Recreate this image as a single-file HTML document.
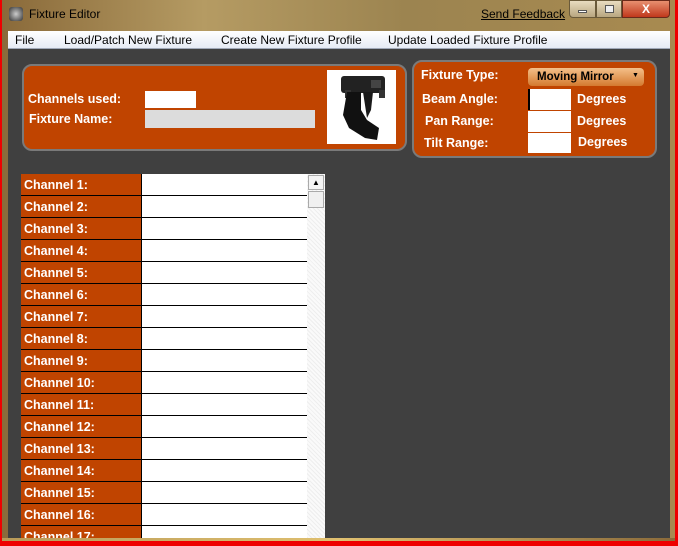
<!DOCTYPE html><html><head><style>
*{margin:0;padding:0;box-sizing:border-box}
body{width:678px;height:546px;overflow:hidden;background:#e00;font-family:"Liberation Sans",sans-serif;position:relative}
.a{position:absolute}
.frame{left:2px;top:0;width:673px;height:541px;background:linear-gradient(90deg,#8a6a3a,#b59b63 30%,#9c8450 60%,#a88a50);}
.title{left:29px;top:7px;font-size:12px;color:#000}
.menu{left:8px;top:31px;width:662px;height:18px;background:linear-gradient(#fff,#e6ebf5);border-bottom:1px solid #a0a8b8;font-size:12px}
.menu span{position:absolute;top:2px}
.content{left:8px;top:49px;width:662px;height:489px;background:#404040}
.panel{background:#c04400;border:2px solid #7a7a7a;border-radius:10px}
.lbl{color:#fff;font-weight:bold;font-size:12.5px;position:absolute}
.box{background:#fff;position:absolute}
.row{position:absolute;left:21px;width:286px;height:22px}
.row .l{position:absolute;left:0;top:0;width:120px;height:22px;background:#c04400;border-bottom:1px solid #000;color:#fff;font-weight:bold;font-size:12.5px;padding:4px 0 0 3px}
.row .i{position:absolute;left:120px;top:0;width:166px;height:22px;background:#fff;border-bottom:1px solid #000;border-left:1px solid #000}
</style></head><body>
<div class="a frame"></div>
<div class="a" style="left:9px;top:7px;width:14px;height:14px;border-radius:3px;background:radial-gradient(#ccc,#333)"></div>
<div class="a title">Fixture Editor</div>
<div class="a" style="left:481px;top:7px;font-size:12px;text-decoration:underline">Send Feedback</div>
<div class="a" style="left:569px;top:0;width:27px;height:18px;background:linear-gradient(#e8dcc0,#b8a680);border:1px solid #6a5a3a;border-radius:0 0 0 4px"><div class="a" style="left:8px;top:9px;width:9px;height:3px;background:#fff;border:1px solid #555"></div></div>
<div class="a" style="left:596px;top:0;width:26px;height:18px;background:linear-gradient(#e8dcc0,#b8a680);border:1px solid #6a5a3a"><div class="a" style="left:8px;top:4px;width:9px;height:8px;border:1px solid #555;background:#eee"></div></div>
<div class="a" style="left:622px;top:0;width:48px;height:18px;background:linear-gradient(#e89070,#c0381c);border:1px solid #6a2a1a;border-radius:0 0 4px 0;color:#fff;font-weight:bold;font-size:12px;text-align:center;line-height:16px">X</div>
<div class="a menu"><span style="left:7px">File</span><span style="left:56px">Load/Patch New Fixture</span><span style="left:213px">Create New Fixture Profile</span><span style="left:380px">Update Loaded Fixture Profile</span></div>
<div class="a content"></div>
<div class="a panel" style="left:22px;top:64px;width:385px;height:87px"></div>
<div class="lbl" style="left:28px;top:92px">Channels used:</div>
<div class="lbl" style="left:29px;top:112px">Fixture Name:</div>
<div class="box" style="left:145px;top:91px;width:51px;height:17px"></div>
<div class="box" style="left:145px;top:110px;width:170px;height:18px;background:#dcdcdc"></div>
<div class="box" style="left:327px;top:70px;width:69px;height:74px">
<svg width="69" height="74"><rect x="14" y="6" width="44" height="17" rx="3" fill="#222"/><rect x="18" y="20" width="6" height="8" fill="#333"/><rect x="52" y="20" width="6" height="8" fill="#333"/><path d="M20 22 L34 22 L34 40 L40 50 L52 58 L50 70 L38 68 L22 58 L16 45 Z" fill="#111"/><path d="M36 22 L46 22 L44 40 L40 48 Z" fill="#1a1a1a"/><rect x="44" y="10" width="10" height="8" fill="#444"/></svg></div>
<div class="a panel" style="left:412px;top:60px;width:245px;height:98px"></div>
<div class="lbl" style="left:421px;top:68px">Fixture Type:</div>
<div class="a" style="left:528px;top:68px;width:116px;height:18px;border-radius:4px;background:linear-gradient(#f4c08a,#d47a30);font-weight:bold;font-size:11.5px;padding:3px 0 0 9px">Moving Mirror <span style="position:absolute;left:104px;top:4px;font-size:7px">▼</span></div>
<div class="lbl" style="left:422px;top:92px">Beam Angle:</div>
<div class="lbl" style="left:425px;top:114px">Pan Range:</div>
<div class="lbl" style="left:424px;top:136px">Tilt Range:</div>
<div class="box" style="left:528px;top:89px;width:43px;height:21px;border-left:2px solid #000"></div>
<div class="box" style="left:528px;top:111px;width:43px;height:21px"></div>
<div class="box" style="left:528px;top:133px;width:43px;height:20px"></div>
<div class="lbl" style="left:577px;top:92px">Degrees</div>
<div class="lbl" style="left:577px;top:114px">Degrees</div>
<div class="lbl" style="left:578px;top:135px">Degrees</div>
<div class="a" style="left:21px;top:174px;width:304px;height:364px;overflow:hidden">
<div class="a" style="left:286px;top:0;width:18px;height:364px;background:repeating-linear-gradient(45deg,#eee 0 1px,#fafafa 1px 3px)"></div>
<div class="a" style="left:287px;top:1px;width:16px;height:15px;background:#f4f4f4;border:1px solid #aaa;font-size:8px;text-align:center;line-height:13px">▲</div>
<div class="a" style="left:287px;top:17px;width:16px;height:17px;background:#f0f0f0;border:1px solid #aaa"></div>
<div id="rows"></div>
</div>
<script>
var h='';for(var i=0;i<17;i++){h+='<div class="row" style="left:0;top:'+(i*22)+'px"><div class="l">Channel '+(i+1)+':</div><div class="i"></div></div>';}
document.getElementById('rows').outerHTML=h;
</script>
<div class="a" style="left:2px;top:538px;width:673px;height:3px;background:linear-gradient(90deg,#b89a58,#e0c070 50%,#8a6a3a)"></div>
</body></html>
